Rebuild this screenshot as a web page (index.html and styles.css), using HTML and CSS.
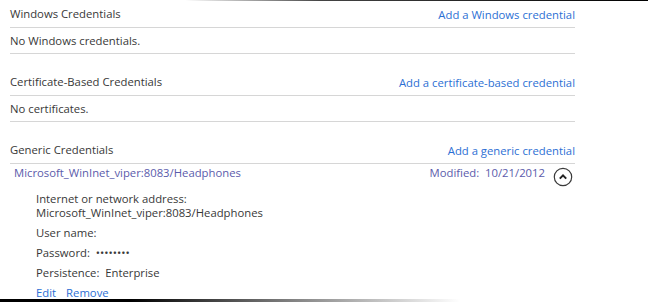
FILE: index.html
```html
<!DOCTYPE html>
<html>
<head>
<meta charset="utf-8">
<link rel="stylesheet" href="styles.css">
</head>
<body>
<div class="edge-top"></div>
<div class="page">
  <section class="section">
    <div class="head"><span class="title">Windows Credentials</span><a class="add">Add a Windows credential</a></div>
    <div class="msg">No Windows credentials.</div>
  </section>
  <section class="section">
    <div class="head"><span class="title">Certificate-Based Credentials</span><a class="add">Add a certificate-based credential</a></div>
    <div class="msg">No certificates.</div>
  </section>
  <section class="section">
    <div class="head"><span class="title">Generic Credentials</span><a class="add">Add a generic credential</a></div>
    <div class="item">
      <div class="item-row">
        <a class="item-name">Microsoft_WinInet_viper:8083/Headphones</a>
        <div class="item-meta">
          <span class="modified">Modified:&nbsp; 10/21/2012</span>
          <svg class="toggle" width="20" height="20" viewBox="0 0 20 20"><circle cx="10" cy="10" r="8.7" fill="none" stroke="#3a3a3a" stroke-width="1.2"/><path d="M6.8 11.6 L10 8.4 L13.2 11.6" fill="none" stroke="#222" stroke-width="2"/></svg>
        </div>
      </div>
      <div class="details">
        <div class="addr">Internet or network address:<br>Microsoft_WinInet_viper:8083/Headphones</div>
        <div class="field">User name:</div>
        <div class="field">Password:&nbsp; <span class="dots">••••••••</span></div>
        <div class="field">Persistence:&nbsp; Enterprise</div>
        <div class="field actions"><a class="act">Edit</a><a class="act">Remove</a></div>
      </div>
    </div>
  </section>
</div>
<div class="edge-bottom"></div>
</body>
</html>
```

FILE: styles.css
```css
html, body {
  margin: 0;
  padding: 0;
  background: #fff;
  overflow: hidden;
}
body {
  width: 648px;
  height: 302px;
  position: relative;
  font-family: "Open Sans", "Noto Sans", sans-serif;
  font-size: 11.3px;
  color: #383838;
}
.page {
  margin-left: 10px;
  width: 565px;
}
.section + .section {
  margin-top: 14px;
}
.head {
  display: flex;
  justify-content: space-between;
  height: 28px;
  box-sizing: border-box;
  padding-top: 6px;
  line-height: 16px;
  border-bottom: 1px solid #d6d6d6;
}
.add {
  color: #2c6fd4;
  padding-top: 1px;
}
.msg {
  height: 26px;
  box-sizing: border-box;
  padding-top: 5px;
  line-height: 16px;
  border-bottom: 1px solid #d6d6d6;
}
.item-row {
  display: flex;
  justify-content: space-between;
  height: 28px;
  box-sizing: border-box;
  padding-top: 1px;
  padding-left: 4px;
  line-height: 16px;
}
.item-name {
  color: #5b5bab;
}
.item-meta {
  display: flex;
  align-items: flex-start;
  gap: 8px;
  margin-right: 2px;
}
.modified {
  color: #5b5bab;
}
.toggle {
  margin-top: 2px;
}
.details {
  padding-left: 26px;
  line-height: 14px;
}
.field {
  margin-top: 6px;
}
.actions {
  display: flex;
  gap: 10px;
}
.act {
  color: #2c6fd4;
}
.edge-top {
  position: absolute;
  top: 0;
  left: 0;
  width: 648px;
  height: 1px;
  background: linear-gradient(to right, rgba(0,0,0,0) 185px, #444 320px, #000 100%);
}
.edge-bottom {
  position: absolute;
  top: 299px;
  left: 0;
  width: 648px;
  height: 3px;
  background: linear-gradient(to right, #000 0, #000 130px, #888 300px, rgba(0,0,0,0) 460px);
}
```
